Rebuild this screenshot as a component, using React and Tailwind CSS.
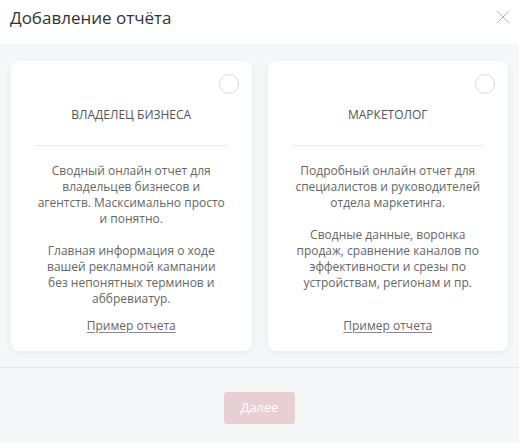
const cards = [
  {
    title: "ВЛАДЕЛЕЦ БИЗНЕСА",
    paras: [
      "Сводный онлайн отчет для владельцев бизнесов и агентств. Масксимально просто и понятно.",
      "Главная информация о ходе вашей рекламной кампании без непонятных терминов и аббревиатур.",
    ],
  },
  {
    title: "МАРКЕТОЛОГ",
    paras: [
      "Подробный онлайн отчет для специалистов и руководителей отдела маркетинга.",
      "Сводные данные, воронка продаж, сравнение каналов по эффективности и срезы по устройствам, регионам и пр.",
    ],
  },
];

function ReportCard({ card }) {
  return (
    <div className="relative h-[290px] flex flex-col rounded-lg bg-white shadow-[0_2px_8px_rgba(0,0,0,0.06)] px-[25px] pt-[46px] pb-[17px]">
      <span className="absolute right-[13px] top-[13px] h-[20px] w-[20px] rounded-full border border-[#d9d9d9] bg-white" />
      <div className="text-center text-[12px] leading-[16px] text-[#555]">{card.title}</div>
      <div className="mt-[22px] border-t border-[#e5e8ea]" />
      <div className="mt-[17px] flex-1 flex flex-col gap-[16px] text-center text-[12px] leading-[16px] text-[#666]">
        {card.paras.map((p, i) => (
          <p key={i}>{p}</p>
        ))}
      </div>
      <div className="text-center text-[12px] leading-[16px]">
        <a className="text-[#666] underline underline-offset-2 decoration-[#888]">Пример отчета</a>
      </div>
    </div>
  );
}

export default function App() {
  return (
    <div
      className="w-[519px] h-[443px] bg-white flex flex-col"
      style={{ fontFamily: '"Open Sans", "Noto Sans", sans-serif' }}
    >
      {/* header */}
      <div className="h-[44px] flex items-start justify-between pl-[10px] pr-[9px] pt-[6px]">
        <h1 className="text-[17px] leading-[24px] text-[#333]">Добавление отчёта</h1>
        <svg width="14" height="14" viewBox="0 0 14 14" className="mt-[4px]">
          <path d="M1 1L13 13M13 1L1 13" stroke="#b5b5b5" strokeWidth="1" fill="none" />
        </svg>
      </div>

      {/* cards */}
      <div className="bg-[#f5f8f9] px-[11px] pt-[17px] pb-[16px] grid grid-cols-2 gap-[16px]">
        {cards.map((c, i) => (
          <ReportCard key={i} card={c} />
        ))}
      </div>

      {/* footer */}
      <div className="flex-1 bg-[#f5f8f9] border-t border-[#e6ebed] flex justify-center pt-[24px]">
        <button className="h-[32px] w-[71px] rounded-[3px] bg-[#e8cfd3] text-[13px] text-white">
          Далее
        </button>
      </div>
    </div>
  );
}
